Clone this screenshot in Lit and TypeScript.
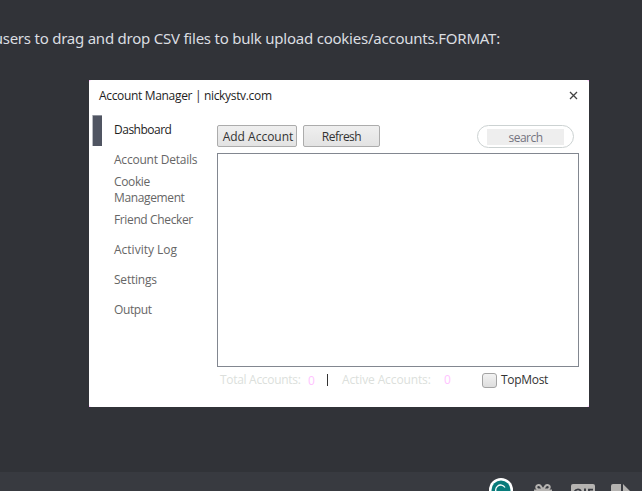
import { LitElement, html, css } from "lit";
import { customElement } from "lit/decorators.js";

@customElement("account-window")
class AccountWindow extends LitElement {
  static styles = css`
    :host {
      display: flex;
      flex-direction: column;
      box-sizing: border-box;
      width: 500px;
      height: 327px;
      background: #fff;
      color: #1e1e1e;
      font: 12px/16px "Open Sans", "Noto Sans", sans-serif;
      border-radius: 2.5px;
    }
    * { box-sizing: border-box; }
    header {
      display: flex;
      justify-content: space-between;
      height: 35px;
      padding: 8px 11px 0 10px;
      white-space: nowrap;
    }
    .title { letter-spacing: -0.33px; }
    header svg { display: block; margin-top: 3px; }
    .body { display: flex; flex: 1; }
    nav { width: 128px; padding-left: 4px; color: #666; }
    .item { display: flex; align-items: center; height: 30px; padding-left: 21px; letter-spacing: -0.37px; }
    .item span { width: 88px; }
    .item.active { color: #1e1e1e; padding-left: 0; letter-spacing: -0.5px; }
    .item.active::before {
      content: "";
      width: 9px;
      height: 30px;
      margin-right: 12px;
      background: #505562;
      border-top: 1px solid #8f939c;
      box-shadow: -1px 0 #b8bbc1;
    }
    .item .loose { letter-spacing: 0; }
    .item .snug { letter-spacing: -0.22px; }
    main { width: 362px; padding-top: 10px; }
    .tools { display: flex; height: 22px; }
    button {
      height: 22px;
      padding: 2px 0 0;
      margin-right: 6px;
      border: 1px solid #acacac;
      border-radius: 2px;
      background: linear-gradient(#efefef, #e3e3e3);
      color: #333;
      font: inherit;
      line-height: 18px;
      white-space: nowrap;
    }
    .add { width: 80px; padding-left: 2px; }
    .refresh { width: 77px; letter-spacing: -0.5px; }
    .search {
      width: 97px;
      height: 23px;
      margin: 0 5px 0 auto;
      padding: 3px 9px;
      border: 1px solid #ccd2d2;
      border-radius: 12px;
    }
    .search span {
      display: block;
      height: 16px;
      background: #eee;
      color: #74747f;
      text-align: center;
      line-height: 17px;
      letter-spacing: -0.5px;
    }
    .list { height: 214px; margin-top: 6px; border: 1px solid #828790; }
    footer { display: flex; height: 26px; padding: 5px 0 0 3px; color: #dcdfdc; white-space: nowrap; }
    .zero { color: #ffc4ff; }
    .n1 { width: 19px; margin-left: 8px; padding-top: 1px; }
    .bar { width: 1px; height: 12px; margin: 2px 14px 0 0; background: #333; }
    .n2 { width: 38px; margin-left: 14px; }
    .total { width: 80px; letter-spacing: -0.3px; }
    .online { width: 88px; letter-spacing: -0.12px; }
    .box {
      width: 15px;
      height: 15px;
      margin: 1px 4px 0 0;
      border: 1px solid #a4a4a4;
      border-radius: 3px;
      background: linear-gradient(#f2f2f2, #dedede);
    }
    .top { color: #333; letter-spacing: -0.3px; }
  `;
  render() {
    return html`
      <header>
        <span class="title">Account Manager | nickystv.com</span>
        <svg width="9" height="9" viewBox="0 0 9 9"><path d="M1 1L8 8M8 1L1 8" stroke="#444" stroke-width="1.3" /></svg>
      </header>
      <div class="body">
        <nav>
          <div class="item active"><span>Dashboard</span></div>
          <div class="item"><span class="snug">Account Details</span></div>
          <div class="item"><span>Cookie Management</span></div>
          <div class="item"><span>Friend Checker</span></div>
          <div class="item"><span class="loose">Activity Log</span></div>
          <div class="item"><span class="snug">Settings</span></div>
          <div class="item"><span>Output</span></div>
        </nav>
        <main>
          <div class="tools">
            <button class="add">Add Account</button>
            <button class="refresh">Refresh</button>
            <div class="search"><span>search</span></div>
          </div>
          <div class="list"></div>
          <footer>
            <span class="total">Total Accounts:</span><span class="zero n1">0</span>
            <span class="bar"></span>
            <span class="online">Active Accounts:</span><span class="zero n2">0</span>
            <span class="box"></span><span class="top">TopMost</span>
          </footer>
        </main>
      </div>
    `;
  }
}

@customElement("app-root")
class AppRoot extends LitElement {
  static styles = css`
    :host {
      display: flex;
      flex-direction: column;
      box-sizing: border-box;
      width: 642px;
      height: 491px;
      overflow: hidden;
      background: #313338;
    }
    .message {
      height: 80px;
      flex: none;
      padding: 27px 0 0;
      box-sizing: border-box;
      width: 500px;
      display: flex;
      justify-content: flex-end;
      color: #dbdee1;
      font: 15px/22px "Noto Sans", sans-serif;
      letter-spacing: -0.23px;
      white-space: nowrap;
    }
    .frame { flex: none; width: 500px; margin-left: 89px; background: #ffb4ff; }
    .composer {
      display: flex;
      justify-content: flex-end;
      height: 19px;
      margin-top: auto;
      background: #383a40;
    }
    .composer svg { display: block; }
  `;
  render() {
    return html`
      <div class="message"><span>users to drag and drop CSV files to bulk upload cookies/accounts.FORMAT:</span></div>
      <div class="frame"><account-window></account-window></div>
      <div class="composer">
        <svg width="160" height="19" viewBox="482 472 160 19">
          <circle cx="501" cy="490" r="12" fill="#fff" />
          <circle cx="501" cy="490" r="9.5" fill="#087b7b" />
          <path d="M505 487.5a5 5 0 1 0 0 5" fill="none" stroke="#fff" stroke-width="1.3" />
          <path d="M542 489.5h-3.5a2.3 2.3 0 1 1 2-3.6l2.5 3.6 2.5-3.6a2.3 2.3 0 1 1 2 3.6H544" fill="none" stroke="#b5b3b1" stroke-width="2" />
          <path d="M534 489.5h18v3h-18z" fill="#b5b3b1" />
          <path d="M571 491v-5q0-2 2-2h20q2 0 2 2v5z" fill="#b5b3b1" />
          <path d="M581 491q-1-1.6-3-1.6-2.5 0-3.5 2.3M585 488.6v3M593 489.6h-4v2" fill="none" stroke="#383a40" stroke-width="1.9" />
          <path d="M611 491v-5q0-2 2-2h8v7zM623 484l7 7h-7z" fill="#b5b3b1" />
        </svg>
      </div>
    `;
  }
}
